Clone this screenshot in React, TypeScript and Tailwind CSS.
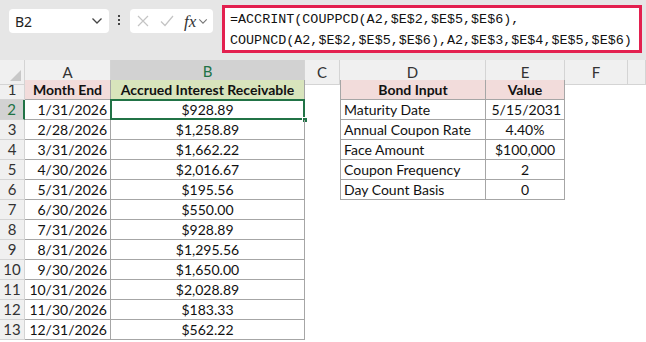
import React from "react";

const cols = [25, 86, 194, 35, 146, 79, 63, 18];
const colLetters = ["", "A", "B", "C", "D", "E", "F", ""];

const dataA = [
  "1/31/2026","2/28/2026","3/31/2026","4/30/2026","5/31/2026","6/30/2026",
  "7/31/2026","8/31/2026","9/30/2026","10/31/2026","11/30/2026","12/31/2026",
];
const dataB = [
  "$928.89","$1,258.89","$1,662.22","$2,016.67","$195.56","$550.00",
  "$928.89","$1,295.56","$1,650.00","$2,028.89","$183.33","$562.22",
];
const dInputs = [
  ["Maturity Date", "5/15/2031", "right"],
  ["Annual Coupon Rate", "4.40%", "center"],
  ["Face Amount", "$100,000", "center"],
  ["Coupon Frequency", "2", "center"],
  ["Day Count Basis", "0", "center"],
];

const gridTemplate = cols.map((c) => `${c}px`).join(" ");

function Chevron() {
  return (
    <svg width="12" height="8" viewBox="0 0 12 8">
      <path d="M1.5 1.5 L6 6 L10.5 1.5" fill="none" stroke="#444" strokeWidth="1.3" />
    </svg>
  );
}

export default function App() {
  const bd = "border-[#a6a6a6]";
  const rows: React.ReactNode[] = [];
  rows.push(
    <React.Fragment key="r1">
      <div className="flex items-center justify-center bg-[#f0f0f0] border-r border-b border-[#d4d4d4] text-[#333] text-[15px]">1</div>
      <div className={`flex items-center justify-center bg-[#f2dcdb] font-bold border-r border-b ${bd}`}>Month End</div>
      <div className={`flex items-center justify-center bg-[#d8e4bc] font-bold border-r border-b ${bd}`}>Accrued Interest Receivable</div>
      <div />
      <div className={`flex items-center justify-center bg-[#f2dcdb] font-bold border-l border-r border-b ${bd}`}>Bond Input</div>
      <div className={`flex items-center justify-center bg-[#f2dcdb] font-bold border-r border-b ${bd}`}>Value</div>
      <div />
      <div />
    </React.Fragment>
  );
  for (let i = 0; i < 12; i++) {
    const rn = i + 2;
    const sel = rn === 2;
    const d = i < 5 ? dInputs[i] : null;
    rows.push(
      <React.Fragment key={`r${rn}`}>
        <div
          className={
            sel
              ? "flex items-center justify-center text-[15px] bg-[#d2d2d2] text-[#217346] border-r-2 border-r-[#217346] border-b border-b-[#d4d4d4]"
              : "flex items-center justify-center text-[15px] bg-[#f0f0f0] text-[#333] border-r border-b border-[#d4d4d4]"
          }
        >
          {rn}
        </div>
        <div className={`flex items-center justify-end pr-[3px] border-r border-b ${bd}`}>{dataA[i]}</div>
        <div className={`relative flex items-center justify-center border-r border-b ${bd}`}>
          {dataB[i]}
          {sel && (
            <>
              <div className="absolute left-[-1px] top-[-1px] right-[-1px] bottom-[-1px] border-2 border-[#217346]" />
              <div className="absolute right-[-4px] bottom-[-4px] w-[6px] h-[6px] bg-[#217346] border border-white" />
            </>
          )}
        </div>
        <div />
        {d ? (
          <div className={`flex items-center justify-start pl-[3px] border-l border-r border-b ${bd}`}>{d[0]}</div>
        ) : (
          <div />
        )}
        {d ? (
          <div
            className={`flex items-center ${d[2] === "right" ? "justify-end pr-[3px]" : "justify-center"} border-r border-b ${bd}`}
          >
            {d[1]}
          </div>
        ) : (
          <div />
        )}
        <div />
        <div />
      </React.Fragment>
    );
  }

  return (
    <div className="w-[646px] h-[342px] overflow-hidden bg-white" style={{ fontFamily: "Lato, 'Liberation Sans', sans-serif" }}>
      <div className="h-[60px] bg-[#e6e6e6] relative flex items-start">
        <div className="ml-[9px] mt-[9px] w-[100px] h-[24px] bg-white rounded-[4px] flex items-center justify-between pl-[6px] pr-[6px]">
          <span className="text-[14px] text-[#222]" style={{ fontFamily: "'Noto Sans', sans-serif" }}>B2</span>
          <Chevron />
        </div>
        <div className="ml-[7px] mt-[15px] flex flex-col gap-[2px] items-center w-[6px]">
          <div className="w-[2px] h-[2px] bg-[#444]" />
          <div className="w-[2px] h-[2px] bg-[#444]" />
          <div className="w-[2px] h-[2px] bg-[#444]" />
        </div>
        <div className="ml-[8px] mt-[9px] w-[83px] h-[24px] bg-white rounded-[4px] flex items-center pl-[7px]">
          <svg width="12" height="12" viewBox="0 0 12 12">
            <path d="M1 1 L11 11 M11 1 L1 11" stroke="#c4c4c4" strokeWidth="1.2" />
          </svg>
          <svg className="ml-[11px]" width="14" height="12" viewBox="0 0 14 12">
            <path d="M1 6.5 L5 10.5 L13 1" fill="none" stroke="#c4c4c4" strokeWidth="1.2" />
          </svg>
          <span className="ml-[10px] text-[17px] italic text-[#333] leading-none" style={{ fontFamily: "'Liberation Serif', serif" }}>fx</span>
          <span className="ml-[2px] flex items-center">
            <svg width="10" height="7" viewBox="0 0 12 8">
              <path d="M1.5 1.5 L6 6 L10.5 1.5" fill="none" stroke="#777" strokeWidth="1.3" />
            </svg>
          </span>
        </div>
        <div className="ml-[9px] mt-[5px] w-[420px] h-[48px] bg-white border-[3px] border-[#e3204f] pl-[5px] pt-[1px]">
          <div className="text-[13.4px] leading-[21px] text-[#111] whitespace-pre" style={{ fontFamily: "'Liberation Mono', monospace" }}>
            {"=ACCRINT(COUPPCD(A2,$E$2,$E$5,$E$6),\nCOUPNCD(A2,$E$2,$E$5,$E$6),A2,$E$3,$E$4,$E$5,$E$6)"}
          </div>
        </div>
      </div>
      <div className="grid h-[20px] text-[15px]" style={{ gridTemplateColumns: gridTemplate }}>
        {colLetters.map((l, i) => {
          if (i === 0)
            return (
              <div key={i} className="relative bg-[#f0f0f0] border-r border-b border-[#d4d4d4]">
                <svg className="absolute right-[3px] bottom-[3px]" width="11" height="11" viewBox="0 0 11 11">
                  <path d="M11 0 L11 11 L0 11 Z" fill="#c8c8c8" />
                </svg>
              </div>
            );
          const sel = l === "B";
          return (
            <div
              key={i}
              className={
                sel
                  ? "flex items-center justify-center bg-[#d2d2d2] text-[#217346] border-r border-r-[#d4d4d4] border-b-2 border-b-[#217346]"
                  : "flex items-center justify-center bg-[#f0f0f0] text-[#333] border-r border-b border-[#d4d4d4]"
              }
            >
              {l}
            </div>
          );
        })}
      </div>
      <div className="grid text-[14px] text-[#111]" style={{ gridTemplateColumns: gridTemplate, gridAutoRows: "20px" }}>
        {rows}
      </div>
    </div>
  );
}
